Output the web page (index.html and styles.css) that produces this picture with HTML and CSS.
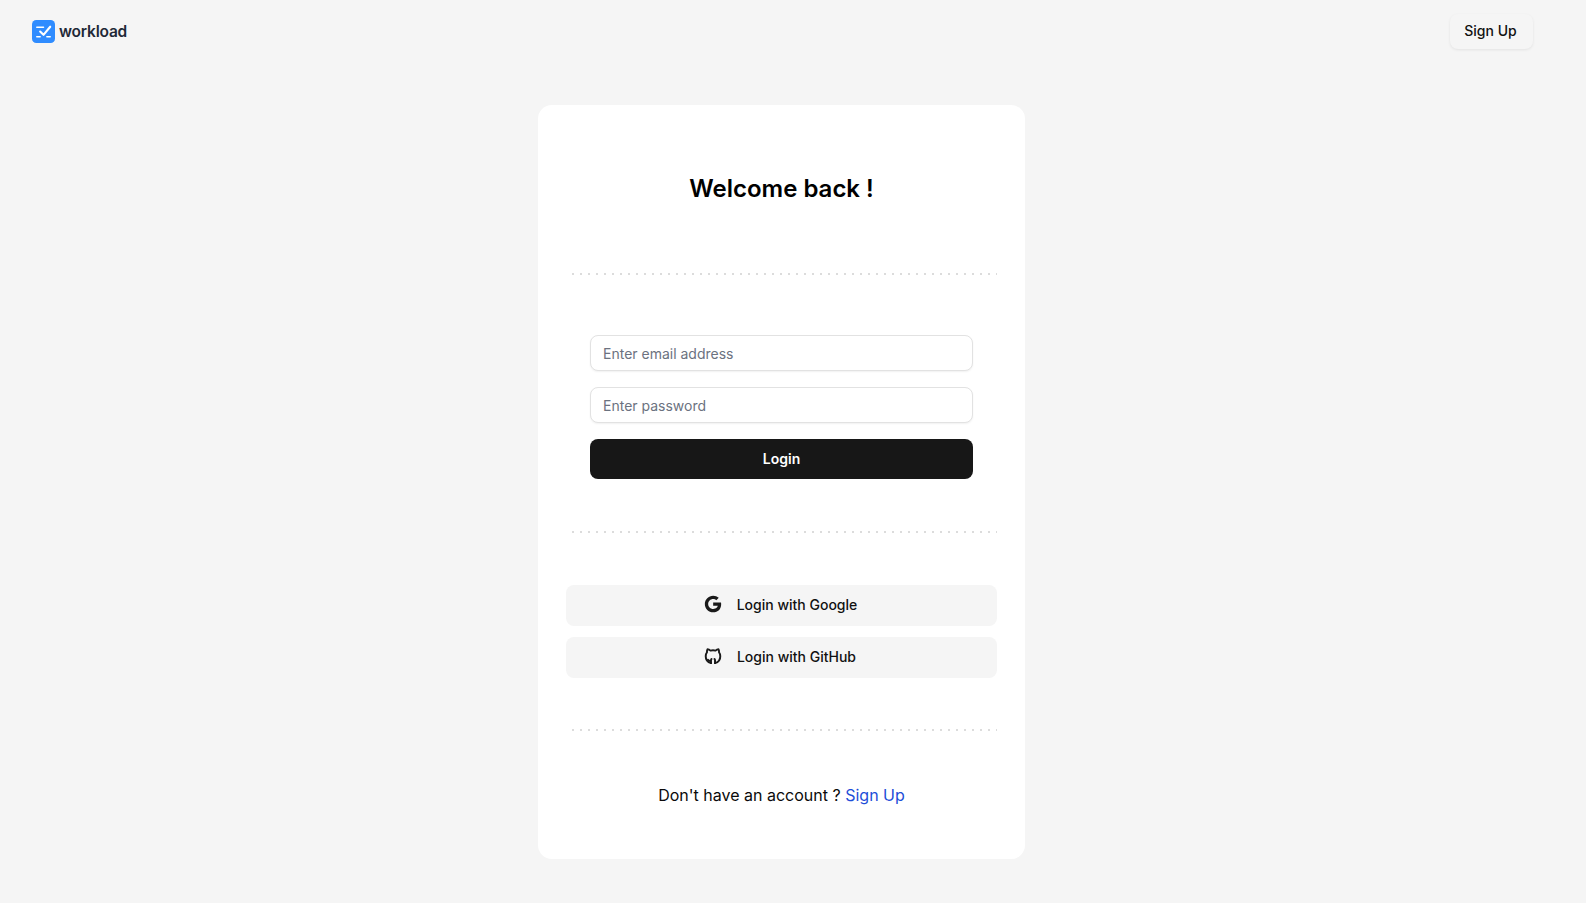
FILE: index.html
```html
<!DOCTYPE html>
<html lang="en">
<head>
  <meta charset="UTF-8">
  <meta name="viewport" content="width=device-width, initial-scale=1.0">
  <title>Login - workload</title>
  <link rel="stylesheet" href="styles.css">
</head>
<body>
  <header class="topbar">
    <a class="logo" href="#">
      <svg class="logo-icon" viewBox="0 0 24 24" width="23" height="23">
        <rect width="24" height="24" rx="4.5" fill="#2f8cff"/>
        <path d="M5 7.500h7M5 17.500h3.500M15.500 17.500H19" fill="none" stroke="#fff" stroke-width="1.600" stroke-linecap="round"/>
        <path d="M8.500 12l3.500 3.500 7-8.500" fill="none" stroke="#fff" stroke-width="2.200" stroke-linecap="round" stroke-linejoin="round"/>
      </svg>
      <span class="logo-text">workload</span>
    </a>
    <a class="signup-btn" href="#">Sign Up</a>
  </header>

  <div class="content">
    <main class="card">
      <h1>Welcome back !</h1>
      <div class="divider"></div>

      <form class="login-form">
        <input type="email" placeholder="Enter email address">
        <input type="password" placeholder="Enter password">
        <button type="button" class="login-btn">Login</button>
      </form>
      <div class="divider"></div>

      <div class="socials">
        <button type="button" class="social-btn">
          <svg viewBox="0 0 24 24" width="20" height="20">
            <path fill="#1a1a1a" d="M12.200 10.200v3.900h5.500c-.2 1.300-1.600 3.800-5.500 3.800-3.300 0-6-2.700-6-6s2.700-6 6-6c1.900 0 3.100.8 3.800 1.500l2.900-2.800C17 3 14.800 2 12.200 2 6.700 2 2.200 6.500 2.200 12s4.500 10 10 10c5.800 0 9.600-4 9.600-9.800 0-.7-.1-1.200-.2-2H12.200z"/>
          </svg>
          <span>Login with Google</span>
        </button>
        <button type="button" class="social-btn">
          <svg class="github-icon" viewBox="0 0 24 24" width="18" height="18">
            <path d="M9.300 21.500C5.200 20.400 2.300 16.600 2.300 12.200c0-2 .6-3.800 1.700-5.200-.2-1.300 0-2.700.6-3.900 1.500 0 2.900.7 4 1.700a11 11 0 0 1 6.800 0c1.100-1 2.500-1.700 4-1.700.6 1.200.8 2.600.6 3.900 1.100 1.400 1.700 3.200 1.700 5.200 0 4.400-2.900 8.200-7 9.300"/>
            <path d="M9.300 21.500V18c0-.8.2-1.500.7-2M14.700 21.500V18c0-.8-.2-1.500-.7-2M9.300 18.500c-1.500.3-3 .2-4-1.500"/>
          </svg>
          <span>Login with GitHub</span>
        </button>
      </div>
      <div class="divider"></div>

      <p class="switch-text">Don't have an account ? <a href="#">Sign Up</a></p>
    </main>
  </div>
</body>
</html>
```

FILE: styles.css
```css
* {
  box-sizing: border-box;
}

body {
  margin: 0;
  min-height: 100vh;
  background-color: #f5f5f5;
  color: #0a0a0a;
  font-family: Inter, "Liberation Sans", sans-serif;
}

a {
  text-decoration: none;
}

.topbar {
  height: 62px;
  padding: 0 53px 0 32px;
  display: flex;
  align-items: center;
  justify-content: space-between;
}

.logo {
  display: flex;
  align-items: center;
  gap: 4px;
}

.logo-text {
  font-size: 15.5px;
  font-weight: 600;
  letter-spacing: -0.2px;
  color: #1f2937;
}

.signup-btn {
  width: 83px;
  height: 35px;
  padding: 0 2px 2px 0;
  border-radius: 8px;
  background-color: #f5f5f5;
  box-shadow: 0 1px 3px rgba(0, 0, 0, 0.08);
  color: #111;
  font-size: 14px;
  font-weight: 500;
  display: flex;
  align-items: center;
  justify-content: center;
}

/* card sits a bit left of the window centre */
.content {
  padding-right: 23px;
  display: flex;
  justify-content: center;
}

.card {
  width: 487px;
  height: 754px;
  margin-top: 43px;
  padding: 0 28px;
  background-color: #fff;
  border-radius: 14px;
}

.card h1 {
  margin: 0;
  padding: 68px 0 68px;
  text-align: center;
  font-size: 24px;
  line-height: 32px;
  font-weight: 600;
  color: #000;
}

.divider {
  height: 2px;
  background-image: linear-gradient(to right, #dcdcdc 2px, transparent 2px);
  background-position: 6px 0;
  background-size: 8px 2px;
}

.login-form {
  padding: 60px 24px 52px;
  display: flex;
  flex-direction: column;
  gap: 16px;
}

.login-form input {
  height: 36px;
  padding: 0 12px;
  border: 1px solid #e2e2e2;
  border-radius: 8px;
  box-shadow: 0 1px 2px rgba(0, 0, 0, 0.06);
  background-color: #fff;
  font-family: inherit;
  font-size: 14px;
  color: #111;
}

.login-form input::placeholder {
  color: #6b7280;
}

.login-btn {
  height: 40px;
  padding-bottom: 2px;
  border: 0;
  border-radius: 8px;
  background-color: #171717;
  color: #fff;
  font-family: inherit;
  font-size: 14px;
  font-weight: 600;
}

.socials {
  padding: 52px 0 51px;
  display: flex;
  flex-direction: column;
  gap: 11px;
}

.social-btn {
  height: 41px;
  padding: 0 3px 3px 0;
  border: 0;
  border-radius: 8px;
  background-color: #f5f5f5;
  color: #111;
  font-family: inherit;
  font-size: 14px;
  font-weight: 500;
  display: flex;
  align-items: center;
  justify-content: center;
  gap: 14px;
}

.github-icon {
  fill: none;
  stroke: #1a1a1a;
  stroke-width: 2.6;
  stroke-linecap: round;
  stroke-linejoin: round;
  margin-right: 1px;
}

.switch-text {
  margin: 54px 0 0;
  text-align: center;
  font-size: 16px;
  line-height: 20px;
}

.switch-text a {
  color: #1d4ed8;
}
```
